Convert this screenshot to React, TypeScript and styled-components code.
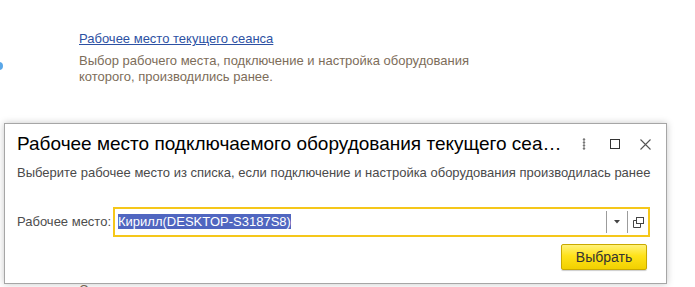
import React from "react";
import styled, { createGlobalStyle } from "styled-components";

const Global = createGlobalStyle`
  html, body { margin: 0; padding: 0; background: #fff; }
  body { font-family: "Liberation Sans", Arial, sans-serif; overflow: hidden; }
  #root { width: 695px; height: 287px; position: relative; overflow: hidden; }
`;

const Page = styled.div`
  position: relative;
  width: 695px;
  height: 287px;
  box-sizing: border-box;
  padding: 31px 0 0 79px;
  display: flex;
  flex-direction: column;
`;

const EdgeMark = styled.div`
  position: absolute;
  left: -5px;
  top: 62px;
  width: 8px;
  height: 8px;
  border-radius: 50%;
  background: #5aa7e8;
`;

const Section = styled.div`
  display: flex;
  flex-direction: column;
  gap: 6px;
`;

const Link = styled.a`
  font-size: 13px;
  line-height: 16px;
  color: #2d51a3;
  text-decoration: underline;
  cursor: pointer;
`;

const Muted = styled.div`
  font-size: 13px;
  line-height: 16px;
  color: #7d6d5a;
  width: 420px;
`;

const Dialog = styled.div`
  position: absolute;
  left: 4px;
  top: 123px;
  width: 663px;
  height: 161px;
  box-sizing: border-box;
  background: #fff;
  border: 1px solid #a6a6a6;
  box-shadow: 0 0 7px rgba(0, 0, 0, 0.22);
  display: flex;
  flex-direction: column;
  padding: 9px 15px 0 12px;
`;

const Header = styled.div`
  display: flex;
  align-items: center;
  height: 22px;
`;

const Title = styled.div`
  width: 546px;
  flex: none;
  font-size: 19px;
  line-height: 22px;
  color: #000;
  white-space: nowrap;
  overflow: hidden;
  text-overflow: ellipsis;
`;

const HeaderIcons = styled.div`
  display: flex;
  align-items: center;
  margin-left: 16px;
  flex: none;
`;

const IconBtn = styled.div<{ $w: number }>`
  width: ${(p) => p.$w}px;
  height: 22px;
  flex: none;
  display: flex;
  align-items: center;
  justify-content: center;
  color: #444;
`;

const Subtitle = styled.div`
  margin-top: 10px;
  font-size: 13px;
  line-height: 16px;
  color: #4a4a4a;
  white-space: nowrap;
`;

const FieldRow = styled.div`
  margin-top: 26px;
  display: flex;
  align-items: center;
`;

const Label = styled.div`
  width: 96px;
  font-size: 13px;
  line-height: 16px;
  color: #4d4d4d;
`;

const Input = styled.div`
  width: 537px;
  height: 30px;
  box-sizing: border-box;
  border: 2px solid #f5c71a;
  display: flex;
  align-items: center;
  padding-left: 3px;
`;

const Value = styled.div`
  flex: 1;
  font-size: 13px;
  line-height: 16px;
  color: #000;
`;

const Selected = styled.span`
  background: #5066c0;
  color: #fff;
`;

const Sep = styled.div`
  width: 1px;
  height: 22px;
  background: #9c9c9c;
`;

const InputBtn = styled.div`
  width: 20px;
  height: 26px;
  display: flex;
  align-items: center;
  justify-content: center;
`;

const Footer = styled.div`
  margin-top: 7px;
  display: flex;
  justify-content: flex-end;
  padding-right: 4px;
`;

const Button = styled.button`
  width: 86px;
  height: 26px;
  box-sizing: border-box;
  border: 1px solid #c9a900;
  border-radius: 2px;
  background: linear-gradient(#fff27a 0%, #ffe21a 45%, #f1d000 100%);
  box-shadow: 0 1px 1px rgba(0, 0, 0, 0.2);
  font-family: "Liberation Sans", Arial, sans-serif;
  font-size: 14px;
  color: #333;
  padding: 0;
  cursor: pointer;
`;

const Covered = styled.div`
  position: absolute;
  left: 79px;
  top: 282px;
  font-size: 13px;
  line-height: 16px;
  color: #7d6d5a;
  text-decoration: underline;
`;

export default function App() {
  return (
    <>
      <Global />
      <Page>
        <EdgeMark />
        <Section>
          <Link>Рабочее место текущего сеанса</Link>
          <Muted>
            Выбор рабочего места, подключение и настройка оборудования
            которого, производились ранее.
          </Muted>
        </Section>
        <Covered>Список внешних компонентов сторонних поставщиков</Covered>
        <Dialog>
          <Header>
            <Title>Рабочее место подключаемого оборудования текущего сеанса</Title>
            <HeaderIcons>
              <IconBtn $w={10}>
                <svg width="4" height="12" viewBox="0 0 4 12">
                  <circle cx="2" cy="1.5" r="1.2" fill="#777" />
                  <circle cx="2" cy="4.5" r="1.2" fill="#777" />
                  <circle cx="2" cy="7.5" r="1.2" fill="#777" />
                  <circle cx="2" cy="10.5" r="1.2" fill="#777" />
                </svg>
              </IconBtn>
              <IconBtn $w={51}>
                <svg width="10" height="10" viewBox="0 0 10 10">
                  <rect x="0.5" y="0.5" width="9" height="9" fill="none" stroke="#333" strokeWidth="1" />
                </svg>
              </IconBtn>
              <IconBtn $w={11}>
                <svg width="11" height="11" viewBox="0 0 11 11">
                  <path d="M0.5 0.5L10.5 10.5M10.5 0.5L0.5 10.5" stroke="#555" strokeWidth="1.1" />
                </svg>
              </IconBtn>
            </HeaderIcons>
          </Header>
          <Subtitle>
            Выберите рабочее место из списка, если подключение и настройка
            оборудования производилась ранее
          </Subtitle>
          <FieldRow>
            <Label>Рабочее место:</Label>
            <Input>
              <Value>
                <Selected>Кирилл(DESKTOP-S3187S8)</Selected>
              </Value>
              <Sep />
              <InputBtn>
                <svg width="6" height="4" viewBox="0 0 6 4">
                  <path d="M0 0H6L3 3.5Z" fill="#444" />
                </svg>
              </InputBtn>
              <Sep />
              <InputBtn>
                <svg width="11" height="11" viewBox="0 0 11 11">
                  <rect x="3.5" y="0.5" width="7" height="6" fill="none" stroke="#444" />
                  <path d="M3.5 3.5H0.5V10.5H7.5V6.5" fill="none" stroke="#444" />
                </svg>
              </InputBtn>
            </Input>
          </FieldRow>
          <Footer>
            <Button>Выбрать</Button>
          </Footer>
        </Dialog>
      </Page>
    </>
  );
}
